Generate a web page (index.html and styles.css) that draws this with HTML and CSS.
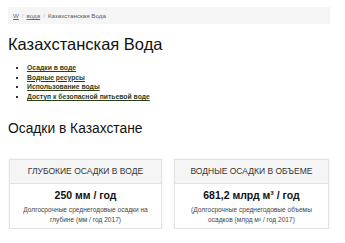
FILE: index.html
```html
<!DOCTYPE html>
<html>
  <head>
    <meta charset="utf-8" />
    <title>Казахстанская Вода</title>
    <link rel="stylesheet" href="styles.css">
  </head>
  <body>
    <div class="page">
      <div class="breadcrumb">
        <a href="#">W</a><span class="sep">/</span><a href="#">вода</a><span class="sep">/</span><span class="current">Казахстанская Вода</span>
      </div>

      <h1>Казахстанская Вода</h1>

      <ul class="toc">
        <li><a href="#">Осадки в воде</a></li>
        <li><a href="#">Водные ресурсы</a></li>
        <li><a href="#">Использование воды</a></li>
        <li><a href="#">Доступ к безопасной питьевой воде</a></li>
      </ul>

      <h2>Осадки в Казахстане</h2>

      <div class="cards">
        <div class="card">
          <div class="card-head">ГЛУБОКИЕ ОСАДКИ В ВОДЕ</div>
          <div class="card-body">
            <div class="value">250 мм / год</div>
            <p>Долгосрочные среднегодовые осадки на глубине (мм / год 2017)</p>
          </div>
        </div>
        <div class="card">
          <div class="card-head">ВОДНЫЕ ОСАДКИ В ОБЪЕМЕ</div>
          <div class="card-body">
            <div class="value">681,2 млрд м³ / год</div>
            <p>(Долгосрочные среднегодовые объемы осадков (млрд м³ / год 2017)</p>
          </div>
        </div>
      </div>
    </div>
  </body>
</html>
```

FILE: styles.css
```css
body {
  margin: 0;
  background: #fff;
  font-family: "Liberation Sans", Arial, sans-serif;
  color: #222;
}
.page {
  padding: 7px 15px 0 8px;
}
.breadcrumb {
  background: #f5f5f5;
  height: 17px;
  line-height: 17px;
  padding-left: 5px;
  font-size: 6.2px;
  color: #555;
}
.breadcrumb a {
  color: #667;
  text-decoration: underline;
}
.breadcrumb .sep {
  color: #bbb;
  margin: 0 3px;
}
h1 {
  font-size: 16.5px;
  font-weight: normal;
  margin: 10px 0 0;
  line-height: 20px;
  color: #111;
}
.toc {
  margin: 9px 0 0;
  padding-left: 19px;
  list-style: square;
  font-size: 6.8px;
  line-height: 9.7px;
  font-weight: bold;
}
.toc li::marker {
  color: #333;
}
.toc a {
  color: #2b3e1c;
  text-decoration: underline;
}
h2 {
  font-size: 13.8px;
  font-weight: normal;
  margin: 18px 0 0;
  line-height: 17px;
  color: #111;
}
.cards {
  display: grid;
  grid-template-columns: 153px 155px;
  gap: 12px;
  margin-top: 22px;
  padding-left: 1px;
}
.card {
  border: 1px solid #e2e2e2;
  box-shadow: 0 0 2px rgba(0, 0, 0, 0.08);
  height: 68px;
}
.card-head {
  background: #f5f5f5;
  border-bottom: 1px solid #e2e2e2;
  height: 23px;
  line-height: 23px;
  text-align: center;
  font-size: 8.5px;
  color: #333;
}
.card-body {
  text-align: center;
  padding-top: 5px;
}
.value {
  font-size: 10.5px;
  font-weight: bold;
  color: #111;
  line-height: 12px;
}
.card-body p {
  margin: 4px 10px 0;
  font-size: 6.6px;
  line-height: 10px;
  color: #444;
}
```
